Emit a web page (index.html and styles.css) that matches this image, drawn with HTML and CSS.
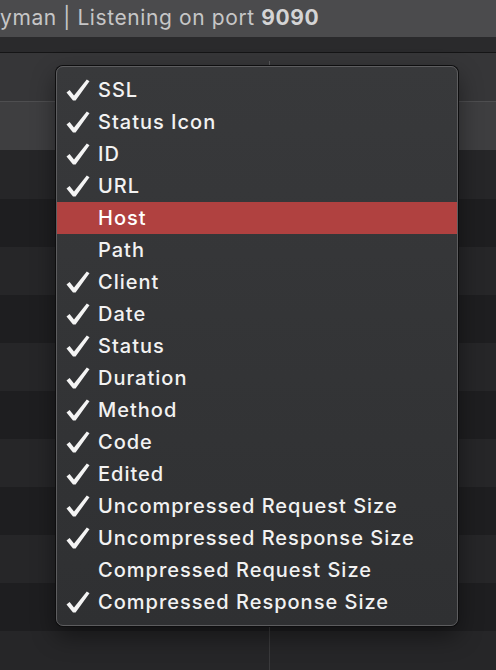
FILE: index.html
```html
<!DOCTYPE html>
<html>
<head>
<meta charset="utf-8">
<link rel="stylesheet" href="styles.css">
</head>
<body>
<div class="app">
  <div class="titlebar"><span class="title">yman | Listening on port <b>9090</b></span></div>
  <div class="toolbar"></div>
  <div class="header"><div class="col col-left"></div><div class="col"></div></div>
  <div class="subheader"></div>
  <div class="rows">
    <div class="row a"><div class="cell"></div><div class="cell"></div></div>
    <div class="row b"><div class="cell"></div><div class="cell"></div></div>
    <div class="row a"><div class="cell"></div><div class="cell"></div></div>
    <div class="row b"><div class="cell"></div><div class="cell"></div></div>
    <div class="row a"><div class="cell"></div><div class="cell"></div></div>
    <div class="row b"><div class="cell"></div><div class="cell"></div></div>
    <div class="row a"><div class="cell"></div><div class="cell"></div></div>
    <div class="row b"><div class="cell"></div><div class="cell"></div></div>
    <div class="row a"><div class="cell"></div><div class="cell"></div></div>
    <div class="row b"><div class="cell"></div><div class="cell"></div></div>
    <div class="row a"><div class="cell"></div><div class="cell"></div></div>
  </div>

  <div class="menu">
    <div class="item"><svg class="check" viewBox="0 0 24 22"><path d="M0.5 13.5 L3.6 11 L8 16.6 L20.8 0.5 L23.5 2.2 L9.6 21.5 L7 21.5 Z"/></svg><span>SSL</span></div>
    <div class="item"><svg class="check" viewBox="0 0 24 22"><path d="M0.5 13.5 L3.6 11 L8 16.6 L20.8 0.5 L23.5 2.2 L9.6 21.5 L7 21.5 Z"/></svg><span>Status Icon</span></div>
    <div class="item"><svg class="check" viewBox="0 0 24 22"><path d="M0.5 13.5 L3.6 11 L8 16.6 L20.8 0.5 L23.5 2.2 L9.6 21.5 L7 21.5 Z"/></svg><span>ID</span></div>
    <div class="item"><svg class="check" viewBox="0 0 24 22"><path d="M0.5 13.5 L3.6 11 L8 16.6 L20.8 0.5 L23.5 2.2 L9.6 21.5 L7 21.5 Z"/></svg><span>URL</span></div>
    <div class="item active"><span class="nocheck"></span><span>Host</span></div>
    <div class="item"><span class="nocheck"></span><span>Path</span></div>
    <div class="item"><svg class="check" viewBox="0 0 24 22"><path d="M0.5 13.5 L3.6 11 L8 16.6 L20.8 0.5 L23.5 2.2 L9.6 21.5 L7 21.5 Z"/></svg><span>Client</span></div>
    <div class="item"><svg class="check" viewBox="0 0 24 22"><path d="M0.5 13.5 L3.6 11 L8 16.6 L20.8 0.5 L23.5 2.2 L9.6 21.5 L7 21.5 Z"/></svg><span>Date</span></div>
    <div class="item"><svg class="check" viewBox="0 0 24 22"><path d="M0.5 13.5 L3.6 11 L8 16.6 L20.8 0.5 L23.5 2.2 L9.6 21.5 L7 21.5 Z"/></svg><span>Status</span></div>
    <div class="item"><svg class="check" viewBox="0 0 24 22"><path d="M0.5 13.5 L3.6 11 L8 16.6 L20.8 0.5 L23.5 2.2 L9.6 21.5 L7 21.5 Z"/></svg><span>Duration</span></div>
    <div class="item"><svg class="check" viewBox="0 0 24 22"><path d="M0.5 13.5 L3.6 11 L8 16.6 L20.8 0.5 L23.5 2.2 L9.6 21.5 L7 21.5 Z"/></svg><span>Method</span></div>
    <div class="item"><svg class="check" viewBox="0 0 24 22"><path d="M0.5 13.5 L3.6 11 L8 16.6 L20.8 0.5 L23.5 2.2 L9.6 21.5 L7 21.5 Z"/></svg><span>Code</span></div>
    <div class="item"><svg class="check" viewBox="0 0 24 22"><path d="M0.5 13.5 L3.6 11 L8 16.6 L20.8 0.5 L23.5 2.2 L9.6 21.5 L7 21.5 Z"/></svg><span>Edited</span></div>
    <div class="item"><svg class="check" viewBox="0 0 24 22"><path d="M0.5 13.5 L3.6 11 L8 16.6 L20.8 0.5 L23.5 2.2 L9.6 21.5 L7 21.5 Z"/></svg><span>Uncompressed Request Size</span></div>
    <div class="item"><svg class="check" viewBox="0 0 24 22"><path d="M0.5 13.5 L3.6 11 L8 16.6 L20.8 0.5 L23.5 2.2 L9.6 21.5 L7 21.5 Z"/></svg><span>Uncompressed Response Size</span></div>
    <div class="item"><span class="nocheck"></span><span>Compressed Request Size</span></div>
    <div class="item"><svg class="check" viewBox="0 0 24 22"><path d="M0.5 13.5 L3.6 11 L8 16.6 L20.8 0.5 L23.5 2.2 L9.6 21.5 L7 21.5 Z"/></svg><span>Compressed Response Size</span></div>
  </div>
</div>
</body>
</html>
```

FILE: styles.css
```css
* { box-sizing: border-box; }
html, body { margin: 0; padding: 0; }
body {
  width: 496px;
  height: 670px;
  overflow: hidden;
  background: #1f1f21;
  font-family: "Inter", "Noto Sans", sans-serif;
}
.app {
  position: relative;
  width: 496px;
  height: 670px;
  overflow: hidden;
  display: flex;
  flex-direction: column;
}
.titlebar {
  height: 37px;
  background: #4b4b4d;
  display: flex;
  align-items: center;
  padding-bottom: 2px;
  flex: none;
}
.title {
  margin-left: 0;
  color: #c6c6c7;
  font-size: 21px;
  font-weight: 400;
  letter-spacing: 0.6px;
  white-space: nowrap;
}
.title b { font-weight: 700; color: #d4d4d5; }
.toolbar {
  height: 16px;
  background: #2a2a2c;
  border-bottom: 1px solid #151516;
  flex: none;
}
.header {
  height: 49px;
  background: #363638;
  border-bottom: 1px solid #4e4e50;
  display: flex;
  flex: none;
}
.header .col-left {
  width: 270px;
  border-right: 1px solid #58585a;
  margin: 8px 0 26px;
}
.subheader {
  height: 48px;
  background: #3e3e40;
  flex: none;
}
.rows { display: flex; flex-direction: column; flex: none; }
.row { height: 48px; display: flex; }
.row.a { background: #262628; }
.row.b { background: #1e1e20; }
.row:first-child { height: 49px; }
.cell:first-child { width: 270px; border-right: 1px solid #3a3a3c; }

.menu {
  position: absolute;
  left: 56px;
  top: 66px;
  width: 402px;
  height: 560px;
  border-radius: 7px;
  background: linear-gradient(180deg, #38393b 0%, #2f3032 100%);
  border: 1px solid #5d5d5f;
  box-shadow: 0 0 0 1px #0e0e0f, 0 10px 24px rgba(0,0,0,0.45);
  padding: 7px 0 0 0;
}
.item {
  height: 32px;
  display: flex;
  align-items: center;
  padding-left: 9px;
  color: #f2f2f2;
  font-size: 20px;
  font-weight: 500;
  letter-spacing: 1px;
  white-space: nowrap;
}
.item.active { background: #b04140; color: #ffffff; }
.check {
  width: 24px;
  height: 22px;
  fill: #f4f4f4;
  margin-right: 8px;
  flex: none;
}
.nocheck { width: 24px; margin-right: 8px; flex: none; }
```
